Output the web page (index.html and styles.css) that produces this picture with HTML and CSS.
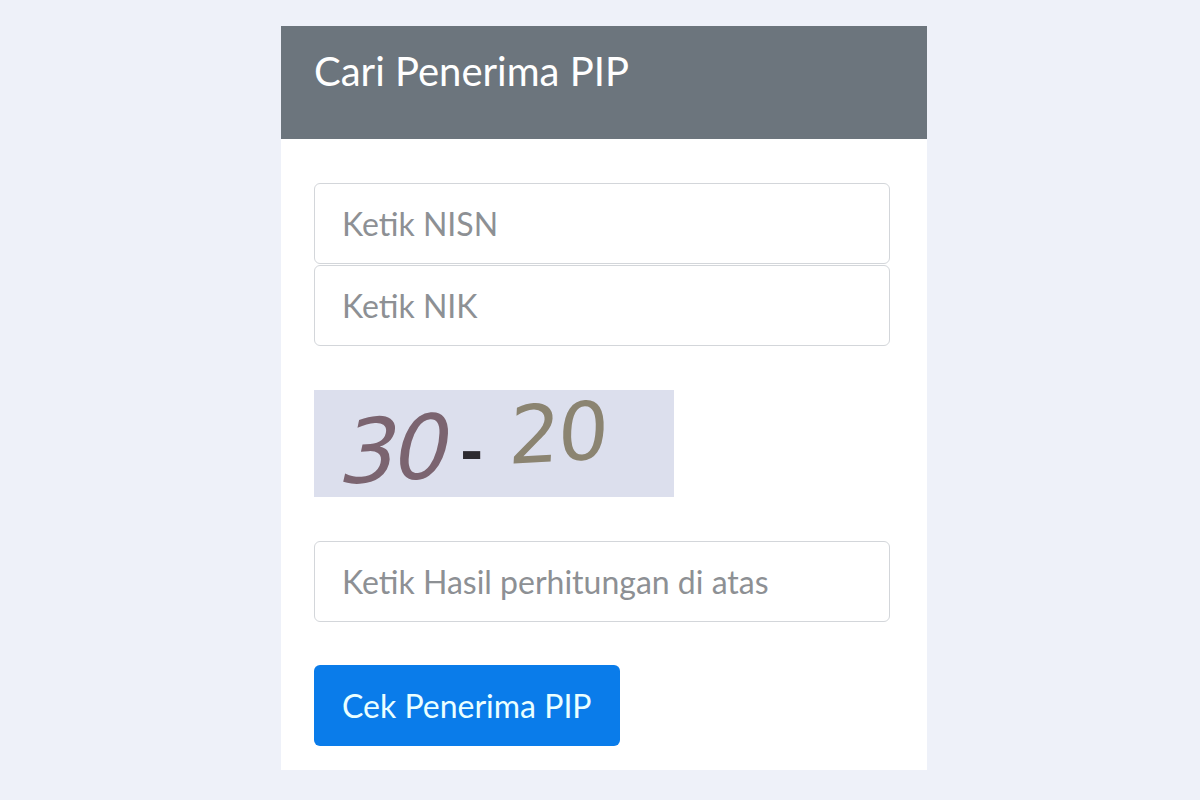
FILE: index.html
```html
<!doctype html>
<html lang="id">

<head>
	<meta charset="UTF-8">
	<title>Cari Penerima PIP</title>
	<meta name="viewport" content="width=device-width, initial-scale=1">
	<link rel="stylesheet" href="styles.css">
</head>

<body>
	<div class="Card">
		<div class="CardHeader">Cari Penerima PIP</div>
		<form class="CardBody" onsubmit="return false;">
			<div class="Group">
				<input type="text" class="Field" placeholder="Ketik NISN">
				<input type="text" class="Field" placeholder="Ketik NIK">
			</div>
			<div class="Captcha">
				<span class="Num1">30</span><span class="Minus">-</span><span class="Num2">20</span>
			</div>
			<input type="text" class="Field" placeholder="Ketik Hasil perhitungan di atas">
			<button type="submit" class="Submit">Cek Penerima PIP</button>
		</form>
	</div>
</body>

</html>
```

FILE: styles.css
```css
body {
	margin: 0;
	background-color: #eef1f9;
	font-family: Lato, "Open Sans", sans-serif;
}

div.Card {
	width: 646px;
	margin: 26px 0 0 281px;
	background-color: white;
}

div.CardHeader {
	height: 113px;
	padding: 0 0 0 33px;
	background-color: #6c757d;
	color: white;
	font-size: 40px;
	line-height: 90px;
}

form.CardBody {
	display: flex;
	flex-direction: column;
	align-items: flex-start;
	gap: 44px;
	padding: 44px 37px 24px 33px;
}

div.Group {
	display: flex;
	flex-direction: column;
	gap: 1px;
}

input.Field {
	box-sizing: border-box;
	width: 576px;
	height: 81px;
	margin: 0;
	padding: 0 27px;
	border: 1px solid #d3d6da;
	border-radius: 6px;
	font-family: inherit;
	font-size: 32px;
	color: #333;
}

input.Field::placeholder {
	color: #8d9094;
}

div.Captcha {
	display: flex;
	align-items: flex-start;
	box-sizing: border-box;
	width: 360px;
	height: 107px;
	padding: 0 0 0 30px;
	background-color: #dcdfed;
	white-space: nowrap;
	font-family: "DejaVu Sans", sans-serif;
	line-height: 1;
}

span.Num1 {
	margin: 16px 0 0 0;
	font-size: 88px;
	font-style: italic;
	color: #7b6470;
	letter-spacing: -4px;
	transform: rotate(-4deg) skewX(-6deg);
}

span.Minus {
	margin: 34px 0 0 12px;
	font-size: 56px;
	font-weight: bold;
	color: #2c2a30;
}

span.Num2 {
	margin: 4px 0 0 26px;
	font-size: 80px;
	color: #8b8471;
	letter-spacing: -2px;
	transform: rotate(-3deg) skewX(-6deg);
}

button.Submit {
	height: 81px;
	margin: -1px 0 0 0;
	padding: 0 28px;
	border: 0;
	border-radius: 6px;
	background-color: #0a7cea;
	color: #eaffff;
	font-family: inherit;
	font-size: 32px;
}
```
